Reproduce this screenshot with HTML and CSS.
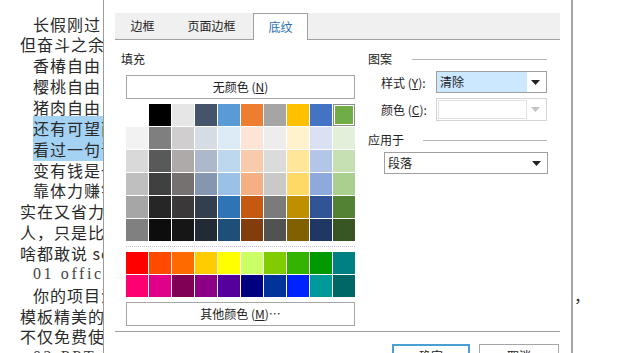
FILE: index.html
```html
<!DOCTYPE html>
<html lang="zh-CN">
<head>
    <meta charset="UTF-8">
    <title>底纹</title>
    <link rel="stylesheet" href="styles.css">
</head>
<body>

    <div class="doc">
        <p class="line in">长假刚过，大家的状态都还没有完全恢复过来，</p>
        <p class="line">但奋斗之余，也想要实现各种自由，</p>
        <p class="line in">香椿自由　车厘子自由</p>
        <p class="line in">樱桃自由　榴莲自由</p>
        <p class="line in">猪肉自由　小龙虾自由</p>
        <p class="line in"><span class="hl">还有可望而不可及的财务自由。</span></p>
        <p class="line in"><span class="hl">看过一句话说，自由就是</span></p>
        <p class="line in">变有钱是一件很难的事情，</p>
        <p class="line in">靠体力赚钱太辛苦，</p>
        <p class="line">实在又省力的办法其实也有，</p>
        <p class="line">人，只是比较少人知道而已，</p>
        <p class="line">啥都敢说 so easy，</p>
        <p class="line in latin">01 office 办公软件</p>
        <p class="line in tail-line"><span class="txt">你的项目汇报、工作总结、年终述职报告需要用到的</span><span class="tail">，</span></p>
        <p class="line">模板精美的办公软件，</p>
        <p class="line">不仅免费使用，而且功能齐全，</p>
        <p class="line in latin">02 PPT 模板</p>
    </div>

    <div class="dialog">
        <div class="tabs">
            <div class="tab t1">边框</div>
            <div class="tab t2">页面边框</div>
            <div class="tab on">底纹</div>
        </div>

        <div class="body">
            <div class="fill">
                <div class="label">填充</div>
                <div class="btn wide">无颜色 (<u>N</u>)</div>
                <div class="grid" id="theme-grid"></div>
                <div class="dash"></div>
                <div class="grid" id="std-grid"></div>
                <div class="btn wide more">其他颜色 (<u>M</u>)…</div>
            </div>

            <div class="side">
                <div class="head"><span>图案</span><i></i></div>
                <div class="row">
                    <span class="lab">样式 (<u>Y</u>):</span>
                    <div class="select style">
                        <span class="val">清除</span>
                        <svg class="arrow" width="9" height="5" viewBox="0 0 9 5"><path d="M0 0H9L4.5 5Z" fill="#222"/></svg>
                    </div>
                </div>
                <div class="row">
                    <span class="lab">颜色 (<u>C</u>):</span>
                    <div class="select off">
                        <span class="val"></span>
                        <svg class="arrow" width="9" height="5" viewBox="0 0 9 5"><path d="M0 0H9L4.5 5Z" fill="#c4c4c4"/></svg>
                    </div>
                </div>
                <div class="head apply"><span>应用于</span><i></i></div>
                <div class="select target">
                    <span class="val">段落</span>
                    <svg class="arrow" width="9" height="5" viewBox="0 0 9 5"><path d="M0 0H9L4.5 5Z" fill="#222"/></svg>
                </div>
            </div>
        </div>

        <div class="sep"></div>

        <div class="foot">
            <div class="btn ok">确定</div>
            <div class="btn">取消</div>
        </div>
    </div>

    <script>
        // Office theme colours, row by row
        const themeColors = [
            ['#ffffff', '#000000', '#e7e6e6', '#44546a', '#5b9bd5', '#ed7d31', '#a5a5a5', '#ffc000', '#4472c4', '#70ad47'],
            ['#f2f2f2', '#7f7f7f', '#d0cece', '#d6dce4', '#ddebf7', '#fce4d6', '#ededed', '#fff2cc', '#d9e1f2', '#e2efda'],
            ['#d9d9d9', '#595959', '#aeaaaa', '#adb9ca', '#bdd7ee', '#f8cbad', '#dbdbdb', '#ffe699', '#b4c6e7', '#c6e0b4'],
            ['#bfbfbf', '#404040', '#757171', '#8497b0', '#9bc2e6', '#f4b084', '#c9c9c9', '#ffd966', '#8ea9db', '#a9d08e'],
            ['#a6a6a6', '#262626', '#3a3838', '#333f4f', '#2f75b5', '#c65911', '#7b7b7b', '#bf8f00', '#305496', '#548235'],
            ['#808080', '#0d0d0d', '#171616', '#222a35', '#1f4e78', '#833c0c', '#525252', '#806000', '#203764', '#375623']
        ];

        const standardColors = [
            ['#ff0000', '#ff4a00', '#ff6a00', '#ffcc00', '#ffff00', '#ccff66', '#80cc00', '#33b400', '#009900', '#008080'],
            ['#ff0070', '#e0008a', '#800055', '#8c0086', '#55009c', '#000080', '#003399', '#0022ff', '#009999', '#006666']
        ];

        function fillGrid(id, rows) {
            const grid = document.getElementById(id);
            rows.forEach((row, r) => {
                row.forEach((color, c) => {
                    const cell = document.createElement('div');
                    cell.className = 'cell';
                    if (id === 'theme-grid' && r === 0 && c === 9) {
                        cell.className += ' picked';
                    }
                    cell.style.background = color;
                    grid.appendChild(cell);
                });
            });
        }

        fillGrid('theme-grid', themeColors);
        fillGrid('std-grid', standardColors);
    </script>

</body>
</html>
```

FILE: styles.css
```css
body {
    margin: 0;
    width: 628px;
    height: 353px;
    overflow: hidden;
    position: relative;
    background: #fff;
}

/* document behind the dialog */
.doc {
    padding: 13.6px 0 0 20px;
    width: 570px;
    font-family: "Noto Sans CJK SC", sans-serif;
    font-size: 16px;
    color: #2a2a2a;
}
.line {
    margin: 0;
    height: 20.86px;
    line-height: 20.86px;
    white-space: nowrap;
    letter-spacing: 1px;
}
.line.in {
    padding-left: 13px;
}
.line.latin {
    font-family: "Liberation Serif", "Noto Sans CJK SC", serif;
    letter-spacing: 2.6px;
    color: #444;
}
.hl {
    background: #a3d2f3;
}
.tail-line {
    display: flex;
}
.tail-line .txt {
    flex: 1;
    overflow: hidden;
}
.tail-line .tail {
    width: 16px;
}

/* dialog */
.dialog {
    position: absolute;
    left: 103px;
    top: -1px;
    width: 445px;
    height: 380px;
    padding: 13px 11px 0;
    background: #fff;
    border: 1px solid #9c9c9c;
    border-right: 2px solid #a6a6a6;
    font-family: "Noto Sans CJK SC", sans-serif;
    font-size: 12px;
    color: #222;
}
.tabs {
    display: flex;
    height: 26px;
    background: #f0f0f0;
    border-bottom: 1px solid #a0a0a0;
}
.tab {
    height: 26px;
    line-height: 26px;
    text-align: center;
}
.t1 {
    width: 55px;
}
.t2 {
    width: 83px;
}
.tab.on {
    width: 55px;
    height: 27px;
    box-sizing: border-box;
    background: #fff;
    border: 1px solid #a0a0a0;
    border-bottom: none;
    line-height: 25px;
    color: #2c6fb0;
}

.body {
    display: flex;
}
.fill {
    width: 245px;
}
.label {
    margin: 12px 0 0 6px;
    height: 14px;
    line-height: 14px;
}
.btn {
    box-sizing: border-box;
    height: 24px;
    line-height: 22px;
    text-align: center;
    background: #fff;
    border: 1px solid #a6a6a6;
}
.btn.wide {
    margin: 9px 0 0 11px;
    width: 229px;
}
.btn.more {
    margin-top: 5px;
}
.grid {
    margin: 5px 0 0 11px;
    width: 229px;
    display: grid;
    grid-template-columns: repeat(10, 22px);
    grid-auto-rows: 22px;
    gap: 1px;
}
.cell.picked {
    box-shadow: inset 0 0 0 1px #8a8a8a, inset 0 0 0 2px #fff;
}
.dash {
    margin: 5px 0 0 11px;
    width: 229px;
    border-top: 1px dotted #c4bedc;
}

.side {
    width: 179px;
    padding-left: 8px;
}
.head {
    display: flex;
    align-items: center;
    margin-top: 12px;
    height: 14px;
    line-height: 14px;
}
.head i {
    flex: 1;
    margin-left: 20px;
    border-top: 1px solid #b4b4b4;
}
.head.apply i {
    margin-left: 19px;
}
.row {
    display: flex;
    align-items: center;
    margin-top: 5px;
    padding-left: 13px;
}
.lab {
    width: 55px;
}
.select {
    box-sizing: border-box;
    display: flex;
    align-items: center;
    height: 22px;
    border: 1px solid #a0a0a0;
    background: #fff;
}
.select .val {
    flex: 1;
    align-self: stretch;
    line-height: 20px;
    padding-left: 3px;
}
.select .arrow {
    margin: 0 6px 0 4px;
}
.select.style {
    width: 111px;
}
.select.style .val {
    background: #cce8ff;
}
.select.off {
    width: 111px;
    height: 23px;
    border-color: #d4d4d4;
}
.select.off .val {
    margin: 1px 0 1px 1px;
    border: 1px solid #e2e2e2;
}
.select.target {
    margin: 5px 0 0 16px;
    width: 164px;
}

.sep {
    margin-top: 5px;
    border-top: 1px solid #a0a0a0;
}
.foot {
    display: flex;
    justify-content: flex-end;
    gap: 9px;
    padding: 12px 1px 0 0;
}
.foot .btn {
    width: 80px;
}
.foot .btn.ok {
    width: 78px;
    border: 2px solid #4a9fd4;
    line-height: 20px;
}
```
